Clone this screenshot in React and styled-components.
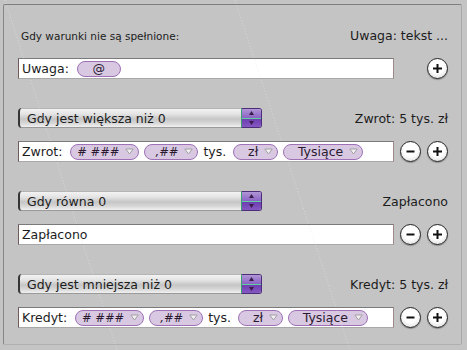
import React from "react";
import styled, { createGlobalStyle } from "styled-components";

const Global = createGlobalStyle`
  html, body { margin: 0; padding: 0; background: #c4c4c4; }
  body { font-family: "DejaVu Sans", "Liberation Sans", sans-serif; color: #1c1c1c; }
`;

const Page = styled.div`
  position: relative;
  width: 467px;
  height: 350px;
  box-sizing: border-box;
  padding: 4px 5px 5px 3px;
  overflow: hidden;
`;

const Frame = styled.div`
  box-sizing: border-box;
  height: 341px;
  border: 1px solid #9c9c9c;
  border-top-color: #7e7e7e;
  border-left-color: #8a8686;
  border-right-color: #a8a8a8;
  border-bottom-color: #b0b0b0;
  border-radius: 2px;
  padding: 22px 13px 0 14px;
  display: flex;
  flex-direction: column;
`;

const Header = styled.div`
  height: 16px;
  display: flex;
  align-items: center;
  justify-content: space-between;
  margin-bottom: 15px;
`;

const Caption = styled.span`
  font-size: 10.5px;
  padding-left: 3px;
  margin-top: 2px;
`;

const Summary = styled.span`
  font-size: 12.5px;
  white-space: nowrap;
`;

const Sections = styled.div`
  display: flex;
  flex-direction: column;
  gap: 29px;
`;

const Section = styled.div`
  display: flex;
  flex-direction: column;
  gap: 13px;
`;

const PopupRow = styled.div`
  display: flex;
  align-items: center;
  justify-content: space-between;
  height: 20px;
`;

const Popup = styled.div`
  width: 244px;
  height: 20px;
  box-sizing: border-box;
  display: flex;
  align-items: stretch;
  border-left: 2px solid #353535;
  border-radius: 4px 3px 3px 4px;
  background: linear-gradient(#f6f6f6 0%, #e4e4e4 30%, #c6c6c6 55%, #d6d6d6 75%, #f7f7f7 100%);
  box-shadow: inset 0 1px 0 #b4b4b4, inset 0 -1px 0 #9a9a9a;
`;

const PopupLabel = styled.span`
  flex: 1;
  font-size: 12.5px;
  padding-left: 7px;
  display: flex;
  align-items: center;
  white-space: nowrap;
`;

const Stepper = styled.div`
  width: 21px;
  display: flex;
  flex-direction: column;
  border-radius: 0 3px 3px 0;
  overflow: hidden;
  border: 1px solid #4d2d7a;
  border-left-color: #3aa070;
  box-sizing: border-box;
`;

const StepHalf = styled.div`
  flex: 1;
  display: grid;
  place-items: center;
  background: ${(p) =>
    p.$down
      ? "linear-gradient(#6e3eb0, #8458c2)"
      : "linear-gradient(#b096d6, #8a62c4)"};
  border-top: ${(p) => (p.$down ? "1px solid #5fd0a0" : "none")};
`;

const FieldRow = styled.div`
  display: flex;
  align-items: center;
  height: 21px;
`;

const Field = styled.div`
  width: 376px;
  height: 21px;
  box-sizing: border-box;
  background: #fff;
  border: 1px solid #a8a8a8;
  border-top-color: #7a7a7a;
  border-left-color: #6e5a5a;
  border-right-color: #a08888;
  display: flex;
  align-items: center;
  gap: 5px;
  padding-left: 3px;
  font-size: 12.5px;
  white-space: nowrap;
`;

const Label = styled.span`
  margin-right: ${(p) => p.$space || 0}px;
`;

const Token = styled.span`
  width: ${(p) => p.$w}px;
  height: 16px;
  box-sizing: border-box;
  border: 1px solid #9e70b6;
  border-radius: 8px;
  background: #d8c8e2;
  display: inline-flex;
  align-items: center;
  justify-content: ${(p) => (p.$center ? "center" : "flex-end")};
  gap: 6px;
  padding-right: ${(p) => (p.$center ? 0 : 4)}px;
  font-size: ${(p) => p.$size || 12.5}px;
  font-style: ${(p) => (p.$italic ? "italic" : "normal")};
  color: #2a1a30;
`;

const Buttons = styled.div`
  flex: 1;
  display: flex;
  justify-content: flex-end;
  gap: 6px;
`;

const RoundButton = styled.div`
  width: 21px;
  height: 21px;
  box-sizing: border-box;
  border-radius: 50%;
  border: 1.5px solid #262626;
  background: radial-gradient(circle at 50% 40%, #ffffff 45%, #e4e4e4 80%, #c4c4c4 100%);
  box-shadow: 0 1px 1px rgba(0, 0, 0, 0.3);
  display: grid;
  place-items: center;
`;

const Overlay = styled.svg`
  position: absolute;
  inset: 0;
  pointer-events: none;
`;

const Chevron = () => (
  <svg width="9" height="7" viewBox="0 0 9 7">
    <path d="M0.8 1 L4.5 6 L8.2 1 Z" fill="#f4f0f6" stroke="#a0a0a0" strokeWidth="1" strokeLinejoin="round" />
  </svg>
);

const Arrow = ({ down }) => (
  <svg width="5" height="4" viewBox="0 0 5 4">
    <path d={down ? "M0 0 L5 0 L2.5 4 Z" : "M0 4 L5 4 L2.5 0 Z"} fill="#3a1d4a" />
  </svg>
);

const Plus = () => (
  <svg width="11" height="11" viewBox="0 0 11 11">
    <path d="M5.5 1 V10 M1 5.5 H10" stroke="#111" strokeWidth="2" />
  </svg>
);

const Minus = () => (
  <svg width="11" height="11" viewBox="0 0 11 11">
    <path d="M1.5 5.5 H9.5" stroke="#111" strokeWidth="2" />
  </svg>
);

const PopupButton = ({ label }) => (
  <Popup>
    <PopupLabel>{label}</PopupLabel>
    <Stepper>
      <StepHalf>
        <Arrow />
      </StepHalf>
      <StepHalf $down>
        <Arrow down />
      </StepHalf>
    </Stepper>
  </Popup>
);

const ChoiceToken = ({ w, children, italic, size }) => (
  <Token $w={w} $italic={italic} $size={size}>
    <span>{children}</span>
    <Chevron />
  </Token>
);

const AmountField = ({ label, space }) => (
  <Field>
    <Label $space={space}>{label}</Label>
    <ChoiceToken w={69} italic size={11.5}>
      # ###
    </ChoiceToken>
    <ChoiceToken w={54} italic size={11.5}>
      ,##
    </ChoiceToken>
    <Label $space={2}>tys.</Label>
    <ChoiceToken w={45}>zł</ChoiceToken>
    <ChoiceToken w={80}>Tysiące</ChoiceToken>
  </Field>
);

const Controls = ({ minus }) => (
  <Buttons>
    {minus && (
      <RoundButton>
        <Minus />
      </RoundButton>
    )}
    <RoundButton>
      <Plus />
    </RoundButton>
  </Buttons>
);

export default function App() {
  return (
    <Page>
      <Global />
      <Frame>
        <Header>
          <Caption>Gdy warunki nie są spełnione:</Caption>
          <Summary>Uwaga: tekst ...</Summary>
        </Header>
        <Sections>
          <Section>
            <FieldRow>
              <Field>
                <Label $space={3}>Uwaga:</Label>
                <Token $w={44} $center>
                  @
                </Token>
              </Field>
              <Controls />
            </FieldRow>
          </Section>
          <Section>
            <PopupRow>
              <PopupButton label="Gdy jest większa niż 0" />
              <Summary>Zwrot: 5 tys. zł</Summary>
            </PopupRow>
            <FieldRow>
              <AmountField label="Zwrot:" space={3} />
              <Controls minus />
            </FieldRow>
          </Section>
          <Section>
            <PopupRow>
              <PopupButton label="Gdy równa 0" />
              <Summary>Zapłacono</Summary>
            </PopupRow>
            <FieldRow>
              <Field>Zapłacono</Field>
              <Controls minus />
            </FieldRow>
          </Section>
          <Section>
            <PopupRow>
              <PopupButton label="Gdy jest mniejsza niż 0" />
              <Summary>Kredyt: 5 tys. zł</Summary>
            </PopupRow>
            <FieldRow>
              <AmountField label="Kredyt:" space={3} />
              <Controls minus />
            </FieldRow>
          </Section>
        </Sections>
      </Frame>
      <Overlay width="467" height="350">
        <line x1="5" y1="0" x2="117" y2="350" stroke="rgba(235,225,245,0.55)" strokeWidth="1" strokeDasharray="1 2" />
        <line x1="235" y1="0" x2="350" y2="350" stroke="rgba(235,225,245,0.55)" strokeWidth="1" strokeDasharray="1 2" />
      </Overlay>
    </Page>
  );
}
